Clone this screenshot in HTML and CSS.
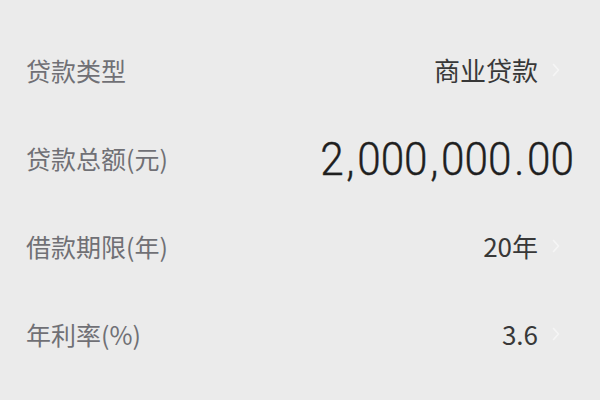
FILE: index.html
```html
<!DOCTYPE html>
<html lang="zh-CN">
<head>
<meta charset="utf-8">
<link rel="stylesheet" href="styles.css">
</head>
<body>
<div class="list">
  <div class="row">
    <span class="label">贷款类型</span>
    <div class="right">
      <span class="value">商业贷款</span>
      <span class="chev"><svg width="8" height="14" viewBox="0 0 8 14"><path d="M1.5 1.5 L6.5 7 L1.5 12.5" fill="none" stroke="#f5f5f5" stroke-width="1.6" stroke-linecap="round" stroke-linejoin="round"/></svg></span>
    </div>
  </div>
  <div class="row">
    <span class="label">贷款总额(元)</span>
    <div class="right">
      <span class="amount">2<span class="p">,</span>000<span class="p">,</span>000<span class="p">.</span>00</span>
    </div>
  </div>
  <div class="row">
    <span class="label">借款期限(年)</span>
    <div class="right">
      <span class="value">20年</span>
      <span class="chev"><svg width="8" height="14" viewBox="0 0 8 14"><path d="M1.5 1.5 L6.5 7 L1.5 12.5" fill="none" stroke="#f5f5f5" stroke-width="1.6" stroke-linecap="round" stroke-linejoin="round"/></svg></span>
    </div>
  </div>
  <div class="row">
    <span class="label">年利率(%)</span>
    <div class="right">
      <span class="value">3.6</span>
      <span class="chev"><svg width="8" height="14" viewBox="0 0 8 14"><path d="M1.5 1.5 L6.5 7 L1.5 12.5" fill="none" stroke="#f5f5f5" stroke-width="1.6" stroke-linecap="round" stroke-linejoin="round"/></svg></span>
    </div>
  </div>
</div>
</body>
</html>
```
FILE: styles.css
```css
html, body {
  margin: 0;
  padding: 0;
  background: #ebebeb;
}
body {
  width: 600px;
  height: 400px;
  overflow: hidden;
  font-family: "Noto Sans CJK SC", "Noto Sans", sans-serif;
}
.list {
  padding-top: 26px;
  display: flex;
  flex-direction: column;
}
.row {
  height: 88px;
  display: flex;
  align-items: center;
  justify-content: space-between;
  padding: 0 26px;
}
.label {
  font-size: 25px;
  font-weight: 400;
  color: #707075;
  line-height: 1;
}
.right {
  display: flex;
  align-items: center;
}
.value {
  font-size: 26px;
  font-weight: 400;
  color: #383838;
  line-height: 1;
}
.chev {
  width: 36px;
  display: flex;
  justify-content: center;
  align-items: center;
}
.chev svg {
  display: block;
}
.amount {
  font-family: Roboto, "Noto Sans", sans-serif;
  font-weight: 300;
  font-size: 47px;
  color: #1f1f1f;
  line-height: 1;
  display: inline-block;
  transform: scaleX(0.9);
  transform-origin: right center;
  -webkit-text-stroke: 0.4px #1f1f1f;
}
.amount .p {
  margin: 0 3px;
}
```
